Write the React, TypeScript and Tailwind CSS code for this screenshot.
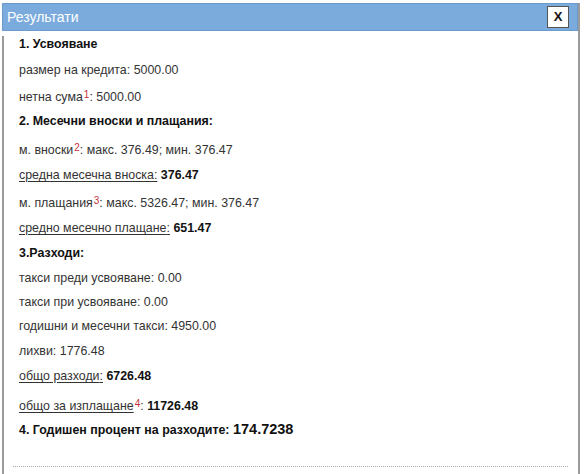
import React from "react";

type Row =
  | { kind: "head"; text: string; gap: string }
  | { kind: "line"; label: string; note?: string; value: string; link?: boolean; strong?: boolean; gap: string };

const rows: Row[] = [
  { kind: "head", text: "1. Усвояване", gap: "mt-[5px]" },
  { kind: "line", label: "размер на кредита", value: "5000.00", gap: "mt-[9px]" },
  { kind: "line", label: "нетна сума", note: "1", value: "5000.00", gap: "mt-[10px]" },
  { kind: "head", text: "2. Месечни вноски и плащания:", gap: "mt-[7px]" },
  { kind: "line", label: "м. вноски", note: "2", value: "макс. 376.49; мин. 376.47", gap: "mt-[12px]" },
  { kind: "line", label: "средна месечна вноска", value: "376.47", link: true, strong: true, gap: "mt-[8px]" },
  { kind: "line", label: "м. плащания", note: "3", value: "макс. 5326.47; мин. 376.47", gap: "mt-[11px]" },
  { kind: "line", label: "средно месечно плащане", value: "651.47", link: true, strong: true, gap: "mt-[8px]" },
  { kind: "head", text: "3.Разходи:", gap: "mt-[8px]" },
  { kind: "line", label: "такси преди усвояване", value: "0.00", gap: "mt-[8px]" },
  { kind: "line", label: "такси при усвояване", value: "0.00", gap: "mt-[7px]" },
  { kind: "line", label: "годишни и месечни такси", value: "4950.00", gap: "mt-[7px]" },
  { kind: "line", label: "лихви", value: "1776.48", gap: "mt-[8px]" },
  { kind: "line", label: "общо разходи", value: "6726.48", link: true, strong: true, gap: "mt-[8px]" },
  { kind: "line", label: "общо за изплащане", note: "4", value: "11726.48", link: true, strong: true, gap: "mt-[13px]" },
];

function Line({ row }: { row: Row }) {
  if (row.kind === "head") {
    return <div className={`${row.gap} h-[17px] leading-[17px] font-bold text-[#111]`}>{row.text}</div>;
  }
  // linked labels underline the colon too, unless a footnote mark sits in between
  const colon = row.link && !row.note;
  return (
    <div className={`${row.gap} h-[17px] leading-[17px] text-[#333]`}>
      <span className={row.link ? "underline underline-offset-2" : ""}>
        {row.label}
        {colon && ":"}
      </span>
      {row.note && <sup className="text-[10px] text-[#c8323c] relative -top-[3px] ml-[1px]">{row.note}</sup>}
      {!colon && <span>:</span>}
      <span> </span>
      <span className={row.strong ? "font-bold text-[#111]" : ""}>{row.value}</span>
    </div>
  );
}

export default function App() {
  return (
    <div className="w-[584px] h-[474px] bg-white overflow-hidden font-['Liberation_Sans',Arial,sans-serif] text-[12.4px]">
      <div className="ml-[2px] mt-[3px] w-[578px] border-r-2 border-[#9a9a9a]">
        {/* title bar */}
        <div className="h-[28px] bg-[#7aabdc] border border-[#6b9bcc] flex items-center justify-between pl-[4px] pr-[8px]">
          <span className="text-white text-[14px]">Результати</span>
          <button className="w-[22px] h-[22px] bg-white border border-[#555] flex items-center justify-center text-[13px] font-bold text-[#111]">
            X
          </button>
        </div>
        {/* body */}
        <div className="border-l-2 border-[#9a9a9a] pl-[15px] pr-[8px] h-[443px]">
          {rows.map((r, i) => (
            <Line key={i} row={r} />
          ))}
          <div className="mt-[5px] h-[19px] leading-[19px] font-bold text-[#111]">
            4. Годишен процент на разходите: <span className="text-[14.5px]">174.7238</span>
          </div>
          <div className="mt-[27px] -ml-[6px] mr-[2px] border-t border-dotted border-[#aaa]" />
        </div>
      </div>
    </div>
  );
}
